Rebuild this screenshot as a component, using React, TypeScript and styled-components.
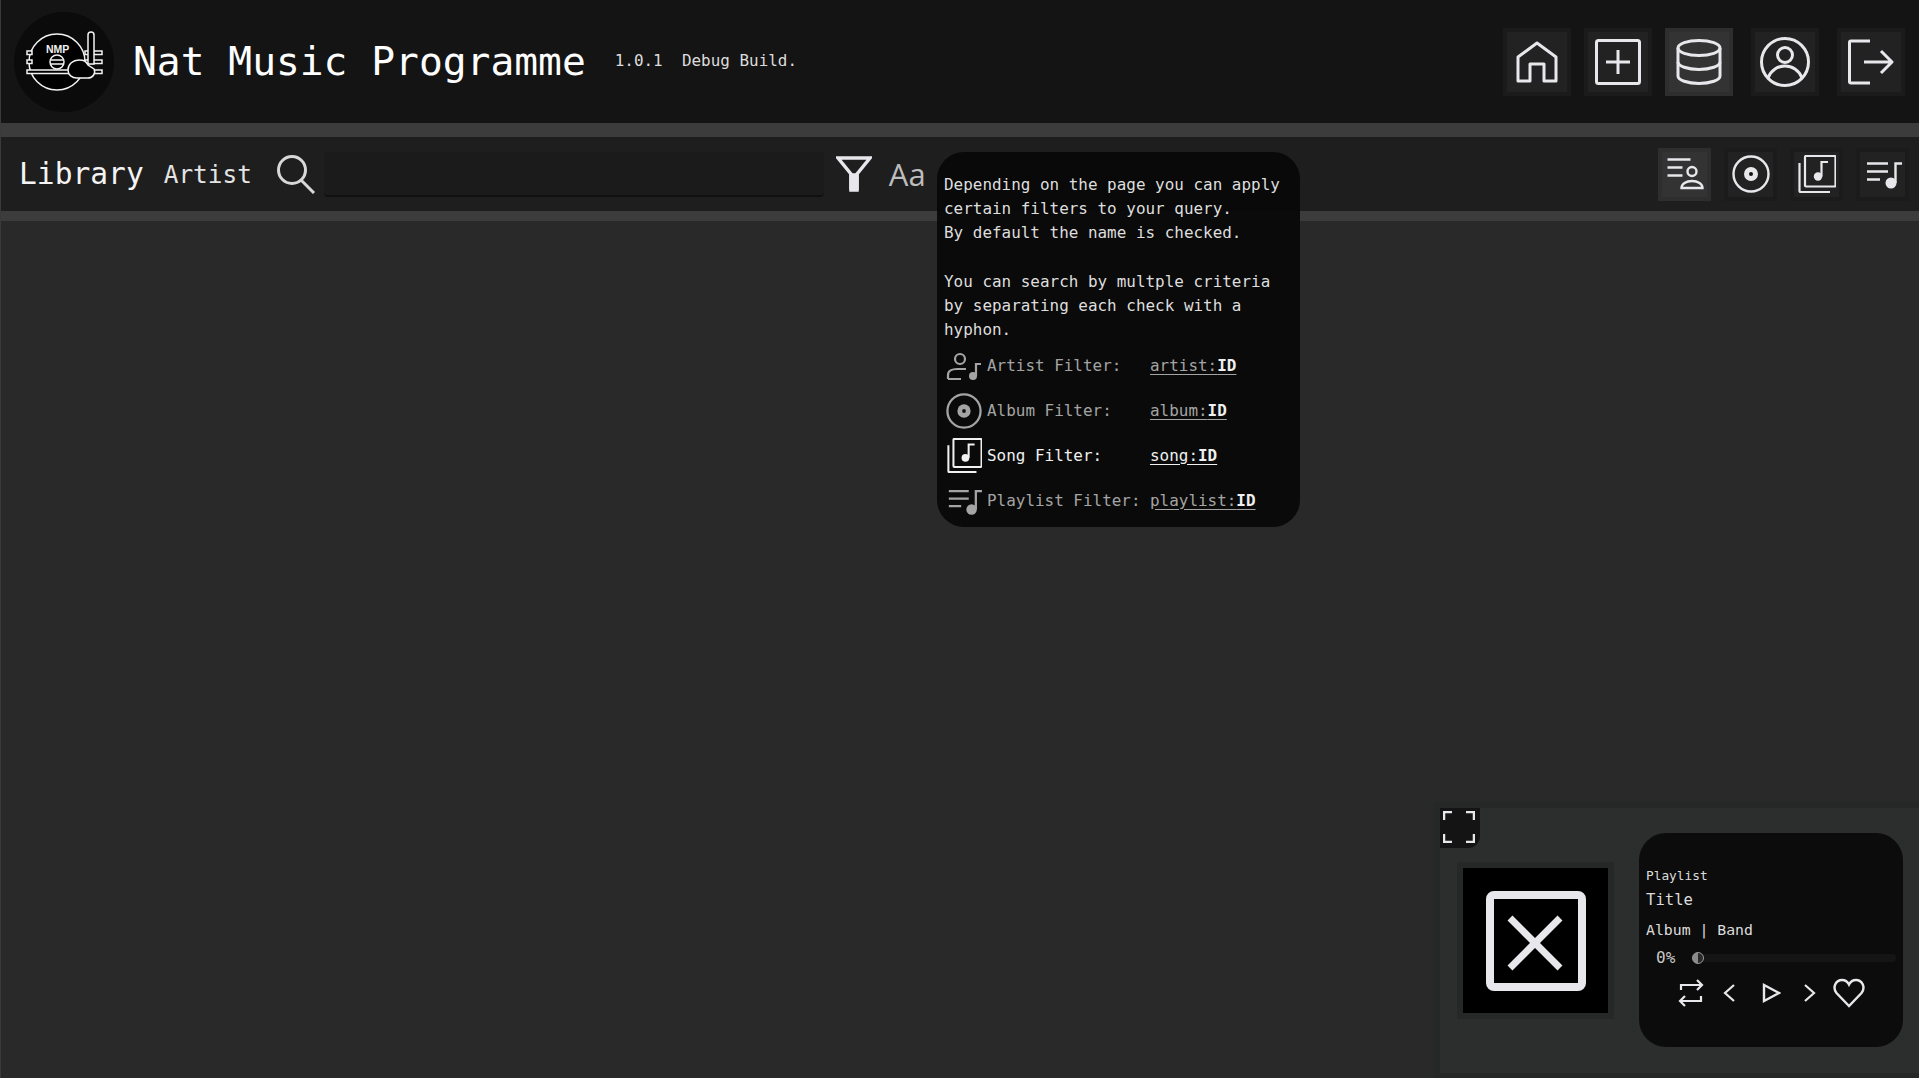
import React from 'react';
import styled, { createGlobalStyle } from 'styled-components';

const mono = `'DejaVu Sans Mono', 'Liberation Mono', monospace`;
const ink = '#e8e8ec';

const GlobalStyle = createGlobalStyle`
  html, body {
    margin: 0;
    height: 100%;
    background: #292929;
  }
  #root {
    height: 100%;
  }
  * {
    box-sizing: border-box;
  }
`;

const Page = styled.div`
  position: relative;
  height: 1078px;
  overflow: hidden;
  background: #292929;
  border-left: 1px solid #3a3a3a;
  color: ${ink};
  font-family: ${mono};
`;

const Header = styled.header`
  height: 123px;
  background: #141414;
  display: flex;
  align-items: center;
  padding: 0 14px 0 13px;
`;

const LogoDisc = styled.div`
  width: 100px;
  height: 100px;
  border-radius: 50%;
  background: #0b0b0b;
  display: flex;
  align-items: center;
  justify-content: center;
  flex: none;
`;

const AppTitle = styled.h1`
  margin: 1px 0 0 19px;
  font-size: 39.6px;
  line-height: 1;
  font-weight: 400;
  color: #fff;
`;

const Version = styled.span`
  margin-left: 29px;
  font-size: 15.95px;
  margin-top: -2px;
  color: #dcdcdc;
  white-space: pre;
`;

const Nav = styled.nav`
  margin-left: auto;
  display: flex;
  align-items: center;
  gap: 13px;
`;

const IconButton = styled.button<{ $size: number; $active?: boolean; $wide?: boolean }>`
  width: ${({ $size }) => $size}px;
  height: ${({ $size }) => $size}px;
  margin-left: ${({ $wide }) => ($wide ? 5 : 0)}px;
  padding: 0;
  flex: none;
  display: flex;
  align-items: center;
  justify-content: center;
  color: ${ink};
  background: ${({ $active }) => ($active ? '#333' : '#222')};
  border: 4px solid ${({ $active }) => ($active ? '#2e2e2e' : '#1b1b1b')};
`;

const Rule = styled.div<{ $height: number }>`
  height: ${({ $height }) => $height}px;
  background: #3c3c3c;
`;

const SearchBar = styled.div`
  height: 74px;
  background: #1e1e1e;
  display: flex;
  align-items: center;
  padding: 0 10px 0 18px;
`;

const Section = styled.span`
  font-size: 29.6px;
  color: #f4f4f4;
`;

const SubSection = styled.span`
  font-size: 24.4px;
  margin: 0 0 0 20px;
  color: #e4e4e4;
`;

const SearchGlyph = styled.span`
  display: flex;
  margin: 0 8px 0 24px;
  color: #d8d8d8;
`;

const SearchInput = styled.div`
  width: 500px;
  height: 45px;
  background: #1b1b1b;
  border-bottom: 2px solid #101010;
  border-radius: 0 0 4px 4px;
`;

const FilterGlyph = styled.span`
  display: flex;
  margin-left: 12px;
  color: ${ink};
`;

const CaseToggle = styled.span`
  margin-left: 17px;
  font-family: 'Open Sans', 'Liberation Sans', sans-serif;
  font-size: 31px;
  color: #bdbdbd;
`;

const Tabs = styled.div`
  margin-left: auto;
  display: flex;
  gap: 13px;
`;

const Popup = styled.aside`
  position: absolute;
  left: 936px;
  top: 152px;
  width: 363px;
  height: 375px;
  padding: 21px 7px 0;
  border-radius: 27px;
  background: rgba(8, 8, 8, 0.93);
  font-size: 15.95px;
  line-height: 24.2px;
  color: #dedede;
`;

const Paragraph = styled.p`
  margin: 0;
  white-space: pre-line;
`;

const FilterList = styled.div`
  margin-top: 1px;
  display: flex;
  flex-direction: column;
`;

const FilterRow = styled.div<{ $on?: boolean }>`
  height: 45px;
  display: flex;
  align-items: center;
  color: ${({ $on }) => ($on ? '#f0f0f0' : '#a4a4a4')};
`;

const FilterIcon = styled.span`
  width: 36px;
  margin: 0 5px 0 2px;
  display: flex;
  justify-content: center;
`;

const FilterName = styled.span`
  width: 163px;
`;

const FilterCode = styled.span`
  text-decoration: underline;
  text-underline-offset: 3px;
  b {
    font-weight: 700;
    color: #f0f0f0;
  }
`;

const Player = styled.section`
  position: absolute;
  left: 1432px;
  top: 802px;
  width: 487px;
  height: 276px;
  padding: 6px 0 5px 7px;
  background: #262827;
`;

const PlayerInner = styled.div`
  position: relative;
  height: 100%;
  background: #2c2e2d;
  display: flex;
  align-items: flex-start;
`;

const ExpandButton = styled.button`
  position: absolute;
  left: 0;
  top: 0;
  width: 40px;
  height: 40px;
  padding: 0 2px 3px 0;
  border: 0;
  border-radius: 0 0 12px 0;
  background: #141414;
  color: ${ink};
  display: flex;
  align-items: center;
  justify-content: center;
`;

const Cover = styled.div`
  width: 157px;
  height: 157px;
  margin: 54px 0 0 17px;
  flex: none;
  background: #000;
  border: 6px solid #262827;
  display: flex;
  align-items: center;
  justify-content: center;
  color: ${ink};
`;

const Card = styled.div`
  width: 264px;
  height: 214px;
  margin: 25px 0 0 25px;
  padding: 34px 7px 0;
  border-radius: 27px;
  background: #0c0c0c;
  display: flex;
  flex-direction: column;
`;

const TrackLine = styled.div<{ $size: number; $height: number }>`
  font-size: ${({ $size }) => $size}px;
  line-height: ${({ $height }) => $height}px;
  color: #dcdcdc;
`;

const Progress = styled.div`
  margin-top: 6px;
  display: flex;
  align-items: center;
  padding-left: 10px;
`;

const Percent = styled.span`
  width: 36px;
  font-size: 16px;
  color: #c8c8c8;
`;

const Track = styled.div`
  position: relative;
  flex: 1;
  height: 8px;
  border-radius: 4px;
  background: #151515;
`;

const Thumb = styled.span`
  position: absolute;
  left: 0;
  top: -2px;
  width: 12px;
  height: 12px;
  border-radius: 50%;
  background: linear-gradient(90deg, #8a8a8a 50%, #2a2a2a 50%);
  border: 1px solid #999;
`;

const Controls = styled.div`
  margin-top: 10px;
  padding-left: 28px;
  display: flex;
  align-items: center;
  color: ${ink};
`;

const ControlSlot = styled.span<{ $width: number }>`
  width: ${({ $width }) => $width}px;
  flex: none;
  display: flex;
  justify-content: center;
`;

interface IconProps {
  size?: number;
  stroke?: number;
}

function Svg({ size = 48, stroke = 2, box = 48, children }: IconProps & { box?: number; children: React.ReactNode }) {
  return (
    <svg
      width={size}
      height={size}
      viewBox={`0 0 ${box} ${box}`}
      fill="none"
      stroke="currentColor"
      strokeWidth={stroke}
    >
      {children}
    </svg>
  );
}

const HomeIcon = () => (
  <Svg size={44} box={44} stroke={3}>
    <path d="M3 41V17L22 3l19 14v24H29V24H15v17H3z" strokeLinejoin="round" />
  </Svg>
);

const AddIcon = () => (
  <Svg size={46} box={46} stroke={3}>
    <rect x="1.5" y="1.5" width="43" height="43" rx="2" />
    <path d="M23 11v24M11 23h24" />
  </Svg>
);

const DatabaseIcon = () => (
  <Svg size={46} box={46} stroke={3}>
    <ellipse cx="23" cy="9" rx="21" ry="7.5" />
    <path d="M2 9v28c0 4 9.5 7.5 21 7.5S44 41 44 37V9" />
    <path d="M2 23c0 4 9.5 7.5 21 7.5S44 27 44 23" />
  </Svg>
);

const UserIcon = () => (
  <Svg size={50} box={50} stroke={3}>
    <circle cx="25" cy="25" r="23.5" />
    <circle cx="25" cy="18" r="7.5" />
    <path d="M8 41c3-8 10-12 17-12s14 4 17 12" />
  </Svg>
);

const LogoutIcon = () => (
  <Svg size={46} box={46} stroke={3}>
    <path d="M22 2H3a1.5 1.5 0 0 0-1.5 1.5v39A1.500 1.500 0 0 0 3 44h19" />
    <path d="M16 23h28M33 12l11 11-11 11" strokeLinejoin="round" />
  </Svg>
);

const ArtistIcon = () => (
  <Svg size={38} box={38} stroke={2.4}>
    <path d="M1.500 4.500h23M1.500 12.500h15M1.500 20.500h15" />
    <circle cx="26" cy="16.500" r="4.500" />
    <path d="M15.500 33c0-4 4.500-7 10.500-7s10.500 3 10.500 7h-21z" />
  </Svg>
);

const AlbumIcon = ({ size = 38 }: IconProps) => (
  <Svg size={size} box={38} stroke={2.4}>
    <circle cx="19" cy="19" r="17.5" />
    <circle cx="19" cy="19" r="7" fill="currentColor" stroke="none" />
    <circle cx="19" cy="19" r="2" fill="#111" stroke="none" />
  </Svg>
);

const SongIcon = ({ size = 38 }: IconProps) => (
  <Svg size={size} box={38} stroke={2.2}>
    <rect x="7" y="1" width="30.500" height="30.500" rx="1" />
    <path d="M1.500 8v28a1 1 0 0 0 1 1h29.500" />
    <circle cx="20" cy="21.500" r="4.200" fill="currentColor" stroke="none" />
    <path d="M23.500 21.500V7h6.500" />
  </Svg>
);

const PlaylistIcon = ({ size = 38 }: IconProps) => (
  <Svg size={size} box={38} stroke={2.4}>
    <path d="M3 8.500h21M3 16.500h21M3 24.500h13" />
    <circle cx="27" cy="28" r="5.500" fill="currentColor" stroke="none" />
    <path d="M31.500 28V8.500h6.500" />
  </Svg>
);

const ArtistSongIcon = () => (
  <Svg size={36} box={36} stroke={2.2}>
    <circle cx="14" cy="11" r="5" />
    <path d="M2 31v-4c0-4 4-6 9-6h9M2 31h13" />
    <circle cx="27" cy="28" r="4" fill="currentColor" stroke="none" />
    <path d="M30 28V16h5" />
  </Svg>
);

const SearchIcon = () => (
  <Svg size={40} box={40} stroke={3}>
    <circle cx="16" cy="16" r="13.500" />
    <path d="M25 26l13 13" />
  </Svg>
);

const FunnelIcon = () => (
  <Svg size={36} box={36} stroke={3.5}>
    <path d="M2 2h32L21 18v14h-6V18L2 2z" strokeLinejoin="miter" />
    <path d="M15 19h6v15h-6z" fill="currentColor" />
  </Svg>
);

const ExpandIcon = () => (
  <Svg size={32} box={32} stroke={2.5}>
    <path d="M9 1H1v8M23 1h8v8M1 23v8h8M31 23v8h-8" />
  </Svg>
);

const MissingIcon = () => (
  <Svg size={100} box={100} stroke={8}>
    <rect x="4" y="4" width="92" height="92" rx="4" />
    <path d="M24 27l50 50M74 27L24 77" strokeWidth={7} />
  </Svg>
);

const RepeatIcon = () => (
  <Svg size={28} box={28} stroke={2.2}>
    <path d="M4 11V6h21M20 1l5 5-5 5M24 17v5H3M8 17l-5 5 5 5" />
  </Svg>
);

const PrevIcon = () => (
  <Svg size={18} box={18} stroke={2.2}>
    <path d="M13 1L4 9l9 8" />
  </Svg>
);

const NextIcon = () => (
  <Svg size={18} box={18} stroke={2.2}>
    <path d="M5 1l9 8-9 8" />
  </Svg>
);

const PlayIcon = () => (
  <Svg size={20} box={20} stroke={2.4}>
    <path d="M3 2v16l15-8L3 2z" />
  </Svg>
);

const HeartIcon = () => (
  <Svg size={32} box={32} stroke={2.4}>
    <path d="M16 29L3.500 16C-1 10 3 3 9 3c3 0 5.500 1.500 7 4.500C17.500 4.500 20 3 23 3c6 0 10 7 5.500 13L16 29z" />
  </Svg>
);

const Logo = () => (
  <svg width="78" height="64" viewBox="0 0 78 64" fill="none" stroke="#f2f2f2" strokeWidth="1.500">
    <circle cx="32" cy="32" r="28" fill="#000" />
    <rect x="2" y="21" width="5" height="3.500" fill="#000" />
    <rect x="2" y="30" width="5" height="3.500" fill="#000" />
    <rect x="60" y="21" width="17" height="3.500" fill="#000" />
    <rect x="60" y="30" width="17" height="3.500" fill="#000" />
    <circle cx="32" cy="32" r="7" />
    <path d="M25.500 30h13M25.500 34h13" />
    <rect x="2" y="40" width="75" height="3.500" fill="#000" />
    <path d="M63 5a3 3 0 0 1 6 0v29h-6z" fill="#000" />
    <path d="M43 40c0-6 5-10 11-10 5 0 7 1 9 5l6 4c2 4-1 9-6 9H52c-5 0-9-3-9-8z" fill="#000" />
    <text x="21" y="23" fill="#f2f2f2" stroke="none" fontFamily="'Liberation Sans', sans-serif" fontWeight="700" fontSize="10.500">
      NMP
    </text>
  </svg>
);

const filters = [
  { icon: <ArtistSongIcon />, name: 'Artist Filter:', code: 'artist:' },
  { icon: <AlbumIcon size={36} />, name: 'Album Filter:', code: 'album:' },
  { icon: <SongIcon size={35} />, name: 'Song Filter:', code: 'song:', on: true },
  { icon: <PlaylistIcon size={36} />, name: 'Playlist Filter:', code: 'playlist:' },
];

export default function App() {
  return (
    <>
      <GlobalStyle />
      <Page>
        <Header>
          <LogoDisc>
            <Logo />
          </LogoDisc>
          <AppTitle>Nat Music Programme</AppTitle>
          <Version>{'1.0.1  Debug Build.'}</Version>
          <Nav>
            <IconButton $size={68}><HomeIcon /></IconButton>
            <IconButton $size={68}><AddIcon /></IconButton>
            <IconButton $size={68} $active><DatabaseIcon /></IconButton>
            <IconButton $size={68} $wide><UserIcon /></IconButton>
            <IconButton $size={68} $wide><LogoutIcon /></IconButton>
          </Nav>
        </Header>
        <Rule $height={14} />
        <SearchBar>
          <Section>Library</Section>
          <SubSection>Artist</SubSection>
          <SearchGlyph><SearchIcon /></SearchGlyph>
          <SearchInput />
          <FilterGlyph><FunnelIcon /></FilterGlyph>
          <CaseToggle>Aa</CaseToggle>
          <Tabs>
            <IconButton $size={53} $active><ArtistIcon /></IconButton>
            <IconButton $size={53}><AlbumIcon /></IconButton>
            <IconButton $size={53}><SongIcon /></IconButton>
            <IconButton $size={53}><PlaylistIcon /></IconButton>
          </Tabs>
        </SearchBar>
        <Rule $height={10} />

        <Popup>
          <Paragraph>
            {`Depending on the page you can apply
certain filters to your query.
By default the name is checked.

You can search by multple criteria
by separating each check with a
hyphon.`}
          </Paragraph>
          <FilterList>
            {filters.map((f) => (
              <FilterRow key={f.code} $on={f.on}>
                <FilterIcon>{f.icon}</FilterIcon>
                <FilterName>{f.name}</FilterName>
                <FilterCode>
                  {f.code}
                  <b>ID</b>
                </FilterCode>
              </FilterRow>
            ))}
          </FilterList>
        </Popup>

        <Player>
          <PlayerInner>
            <ExpandButton><ExpandIcon /></ExpandButton>
            <Cover><MissingIcon /></Cover>
            <Card>
              <TrackLine $size={12.8} $height={17}>Playlist</TrackLine>
              <TrackLine $size={15.6} $height={33}>Title</TrackLine>
              <TrackLine $size={14.8} $height={25}>Album | Band</TrackLine>
              <Progress>
                <Percent>0%</Percent>
                <Track><Thumb /></Track>
              </Progress>
              <Controls>
                <ControlSlot $width={33}><RepeatIcon /></ControlSlot>
                <ControlSlot $width={46}><PrevIcon /></ControlSlot>
                <ControlSlot $width={36}><PlayIcon /></ControlSlot>
                <ControlSlot $width={40}><NextIcon /></ControlSlot>
                <ControlSlot $width={39}><HeartIcon /></ControlSlot>
              </Controls>
            </Card>
          </PlayerInner>
        </Player>
      </Page>
    </>
  );
}
